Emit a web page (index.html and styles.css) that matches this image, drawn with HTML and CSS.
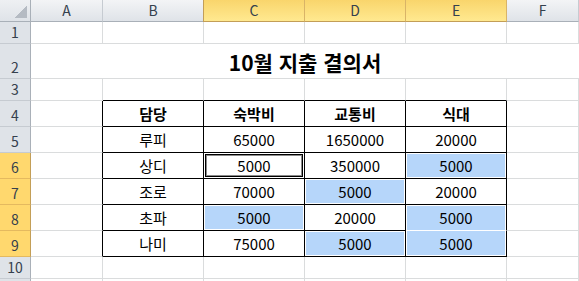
FILE: index.html
```html
<!DOCTYPE html>
<html lang="ko">
<head>
<meta charset="utf-8">
<title>10월 지출 결의서</title>
<link rel="stylesheet" href="styles.css">
</head>
<body>
<div class="sheet">
  <div class="corner"><div class="tri"></div></div>
  <div class="ch">A</div>
  <div class="ch">B</div>
  <div class="ch sel first">C</div>
  <div class="ch sel">D</div>
  <div class="ch sel">E</div>
  <div class="ch">F</div>

  <div class="rh">1</div>
  <div class="c"></div><div class="c"></div><div class="c"></div><div class="c"></div><div class="c"></div><div class="c"></div>

  <div class="rh">2</div>
  <div class="c title">10월 지출 결의서</div>

  <div class="rh">3</div>
  <div class="c"></div><div class="c bb"></div><div class="c bb"></div><div class="c bb"></div><div class="c bb"></div><div class="c"></div>

  <div class="rh">4</div>
  <div class="c br"></div>
  <div class="c t b">담당</div><div class="c t b">숙박비</div><div class="c t b">교통비</div><div class="c t b">식대</div>
  <div class="c"></div>

  <div class="rh">5</div>
  <div class="c br"></div>
  <div class="c t">루피</div><div class="c t">65000</div><div class="c t">1650000</div><div class="c t">20000</div>
  <div class="c"></div>

  <div class="rh rsel">6</div>
  <div class="c br"></div>
  <div class="c t">상디</div><div class="c t active">5000</div><div class="c t">350000</div><div class="c t blue">5000</div>
  <div class="c"></div>

  <div class="rh rsel">7</div>
  <div class="c br"></div>
  <div class="c t">조로</div><div class="c t">70000</div><div class="c t blue">5000</div><div class="c t">20000</div>
  <div class="c"></div>

  <div class="rh rsel">8</div>
  <div class="c br"></div>
  <div class="c t">초파</div><div class="c t blue">5000</div><div class="c t">20000</div><div class="c t blue top">5000</div>
  <div class="c"></div>

  <div class="rh rsel">9</div>
  <div class="c br"></div>
  <div class="c t">나미</div><div class="c t">75000</div><div class="c t blue">5000</div><div class="c t blue bottom">5000</div>
  <div class="c"></div>

  <div class="rh">10</div>
  <div class="c"></div><div class="c"></div><div class="c"></div><div class="c"></div><div class="c"></div><div class="c"></div>

  <div class="rh"></div>
  <div class="c"></div><div class="c"></div><div class="c"></div><div class="c"></div><div class="c"></div><div class="c"></div>
</div>
</body>
</html>
```

FILE: styles.css
```css
html, body {
  margin: 0;
  padding: 0;
  background: #fff;
  overflow: hidden;
}

.sheet {
  display: grid;
  grid-template-columns: 31px 72px 101px 101px 101px 101px 72px;
  grid-template-rows: 22px 22px 35px 22px repeat(6, 26px) 22px 1fr;
  width: 579px;
  height: 281px;
  overflow: hidden;
  font-family: "Noto Sans CJK KR", "Noto Sans", sans-serif;
  font-size: 15px;
  color: #000;
}

.sheet > div {
  box-sizing: border-box;
}

.corner {
  background: linear-gradient(#eef0f3, #dfe3e8);
  border-right: 1px solid #a9b0b8;
  border-bottom: 1px solid #a9b0b8;
  display: flex;
  justify-content: flex-end;
  align-items: flex-end;
  padding: 0 3px 3px 0;
}

.tri {
  width: 13px;
  height: 13px;
  background: linear-gradient(135deg, transparent 50%, #b5bbc3 50%);
}

.ch {
  background: linear-gradient(#f3f4f6, #dfe3e8);
  border-right: 1px solid #c6cbd1;
  border-bottom: 1px solid #a9b0b8;
  color: #35404d;
  font-size: 14px;
  line-height: 18px;
  display: flex;
  justify-content: center;
  align-items: flex-end;
  padding-bottom: 2px;
}

.ch.sel {
  background: linear-gradient(#f9d56c, #ffe990);
  border-right-color: #d9b467;
  border-bottom-color: #c39e57;
}

.ch.first {
  border-left: 1px solid #c39e57;
  margin-left: -1px;
}

.rh {
  background: #dfe3e8;
  border-right: 1px solid #a9b0b8;
  border-bottom: 1px solid #c6cbd1;
  color: #35404d;
  font-size: 14px;
  line-height: 18px;
  display: flex;
  justify-content: center;
  align-items: flex-end;
  padding-bottom: 2px;
}

.rh.rsel {
  background: #ffd86e;
  border-right-color: #c39e57;
  border-bottom-color: #e4b95f;
}

.c {
  border-right: 1px solid #dadcdd;
  border-bottom: 1px solid #dadcdd;
  display: flex;
  justify-content: center;
  align-items: flex-end;
  line-height: 18px;
  padding-bottom: 3px;
  position: relative;
}

.title {
  grid-column: 2 / span 6;
  border-right: none;
  font-size: 21px;
  font-weight: 700;
  line-height: 24px;
  padding-bottom: 4px;
}

.bb {
  border-bottom-color: #000;
}

.br {
  border-right-color: #000;
}

.c.t {
  border-right-color: #000;
  border-bottom-color: #000;
}

.b {
  font-weight: 700;
}

.blue {
  background: #b6d6fa;
  box-shadow: inset 0 0 0 1px #fff;
}

.blue.top {
  border-bottom-color: #fff;
  box-shadow: inset 1px 0 0 #fff, inset -1px 0 0 #fff, inset 0 1px 0 #fff;
}

.blue.bottom {
  box-shadow: inset 1px 0 0 #fff, inset -1px 0 0 #fff, inset 0 -1px 0 #fff;
}

.active::after {
  content: "";
  position: absolute;
  left: 1px;
  top: 1px;
  right: 1px;
  bottom: 1px;
  border: 1px solid #000;
  box-shadow: inset 0 0 0 1px #8a8a8a;
}
```
